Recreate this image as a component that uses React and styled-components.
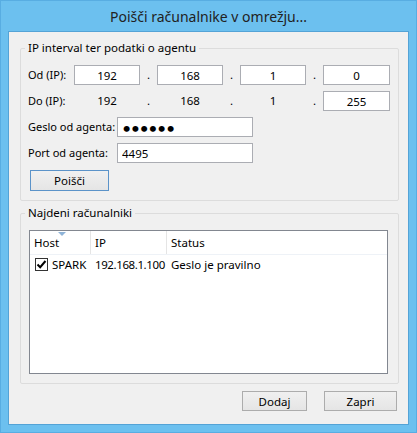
import React from "react"
import styled, { createGlobalStyle } from "styled-components"

const Global = createGlobalStyle`
  html, body {
    margin: 0;
    padding: 0;
    background: #6cc0ef;
  }
  body {
    font-family: "Noto Sans", "Open Sans", Arial, sans-serif;
    font-size: 11.5px;
    color: #000;
  }
`;

const Window = styled.div`
  width: 417px;
  height: 433px;
  box-sizing: border-box;
  background: #6cc0ef;
  border: 1px solid #58ade2;
  padding: 0 7px 7px;
  display: flex;
  flex-direction: column;
`;

const TitleBar = styled.div`
  height: 30px;
  display: flex;
  align-items: center;
  justify-content: center;
  font-size: 14px;
  color: #222;
`;

const Client = styled.div`
  flex: 1;
  background: #f0f0f0;
  border: 1px solid #54a3d6;
  padding: 8px 9px 12px 11px;
  display: flex;
  flex-direction: column;
`;

const Group = styled.fieldset`
  margin: ${p => p.$gap || 0}px 0 0;
  border: 1px solid #dcdcdc;
  border-radius: 2px;
  padding: 9px 9px 9px 7px;
  min-width: 0;
`;

const Legend = styled.legend`
  padding: 0 3px;
  margin-left: -3px;
  line-height: 16px;
  height: 16px;
`;

const Rows = styled.div`
  display: flex;
  flex-direction: column;
  gap: 6px;
`;

const IpRow = styled.div`
  display: grid;
  grid-template-columns: 46px 66px 17px 66px 17px 66px 17px 67px;
  height: 20px;
  align-items: center;
`;

const Label = styled.span`
  width: ${p => p.$width || "auto"};
  font-size: 11px;
  white-space: nowrap;
  line-height: 20px;
`;

const Dot = styled.span`
  text-align: center;
  line-height: 20px;
`;

const Octet = styled.span`
  text-align: center;
  line-height: 20px;
`;

const Input = styled.input`
  box-sizing: border-box;
  width: ${p => p.$width || "100%"};
  height: 20px;
  border: 1px solid #abadb3;
  background: #fff;
  font-family: inherit;
  font-size: 11.5px;
  color: #000;
  padding: 0 ${p => (p.$center ? 0 : 4)}px;
  text-align: ${p => (p.$center ? "center" : "left")};
  outline: none;
  margin: 0;
`;

const PasswordInput = styled(Input)`
  font-family: Lato, sans-serif;
  font-size: 16px;
  letter-spacing: -0.5px;
`;

const FieldRow = styled.div`
  display: flex;
  align-items: center;
  height: 20px;
`;

const Button = styled.button`
  box-sizing: border-box;
  width: ${p => p.$width}px;
  height: ${p => p.$height || 20}px;
  border: 1px solid ${p => (p.$primary ? "#5b93c9" : "#acacac")};
  background: linear-gradient(#f0f0f0, #e5e5e5);
  font-family: inherit;
  font-size: 11.5px;
  color: #000;
  padding: 0;
  margin: 0;
`;

const SearchRow = styled.div`
  margin-top: 7px;
  padding-left: 2px;
`;

const List = styled.div`
  margin-left: 1px;
  width: 359px;
  height: 144px;
  box-sizing: border-box;
  border: 1px solid #828790;
  background: #fff;
`;

const ListHeader = styled.div`
  display: grid;
  grid-template-columns: 61px 76px 1fr;
  height: 23px;
  border-bottom: 1px solid #eef2f7;
`;

const HeadCell = styled.div`
  position: relative;
  display: flex;
  align-items: center;
  padding-left: 4px;
  border-right: ${p => (p.$last ? "none" : "1px solid #e5e5e5")};
`;

const SortArrow = styled.span`
  position: absolute;
  top: 1px;
  left: 28px;
  width: 0;
  height: 0;
  border-left: 4px solid transparent;
  border-right: 4px solid transparent;
  border-top: 4px solid #8fb4d8;
`;

const ListRow = styled.div`
  display: grid;
  grid-template-columns: 61px 76px 1fr;
  height: 19px;
  align-items: center;
`;

const Cell = styled.div`
  display: flex;
  align-items: center;
  gap: 4px;
  padding-left: ${p => p.$pad ?? 4}px;
  white-space: nowrap;
  letter-spacing: ${p => p.$spacing || 0}px;
`;

const Check = styled.span`
  box-sizing: border-box;
  width: 13px;
  height: 13px;
  border: 1px solid #333;
  background: #fff;
  display: inline-flex;
  align-items: center;
  justify-content: center;
`;

const Footer = styled.div`
  margin-top: 7px;
  padding-right: 2px;
  display: flex;
  justify-content: flex-end;
  gap: 17px;
`;

export default function App() {
  return (
    <>
      <Global />
      <Window>
        <TitleBar>Poišči računalnike v omrežju...</TitleBar>
        <Client>
          <Group>
            <Legend>IP interval ter podatki o agentu</Legend>
            <Rows>
              <IpRow>
                <Label>Od (IP):</Label>
                <Input $center readOnly defaultValue="192" />
                <Dot>.</Dot>
                <Input $center readOnly defaultValue="168" />
                <Dot>.</Dot>
                <Input $center readOnly defaultValue="1" />
                <Dot>.</Dot>
                <Input $center readOnly defaultValue="0" />
              </IpRow>
              <IpRow>
                <Label>Do (IP):</Label>
                <Octet>192</Octet>
                <Dot>.</Dot>
                <Octet>168</Octet>
                <Dot>.</Dot>
                <Octet>1</Octet>
                <Dot>.</Dot>
                <Input $center readOnly defaultValue="255" />
              </IpRow>
              <FieldRow>
                <Label $width="89px">Geslo od agenta:</Label>
                <PasswordInput $width="136px" type="password" readOnly defaultValue="secret" />
              </FieldRow>
              <FieldRow>
                <Label $width="89px">Port od agenta:</Label>
                <Input $width="136px" readOnly defaultValue="4495" />
              </FieldRow>
            </Rows>
            <SearchRow>
              <Button $primary $width={79} $height={21}>Poišči</Button>
            </SearchRow>
          </Group>

          <Group $gap={4}>
            <Legend>Najdeni računalniki</Legend>
            <List>
              <ListHeader>
                <HeadCell>
                  <SortArrow />
                  Host
                </HeadCell>
                <HeadCell>IP</HeadCell>
                <HeadCell $last>Status</HeadCell>
              </ListHeader>
              <ListRow>
                <Cell $pad={5}>
                  <Check>
                    <svg width="11" height="11" viewBox="0 0 11 11">
                      <path d="M1.5 5.5 L4.2 8.2 L9.5 2" fill="none" stroke="#000" strokeWidth="2" />
                    </svg>
                  </Check>
                  SPARK
                </Cell>
                <Cell $spacing={-0.4}>192.168.1.100</Cell>
                <Cell>Geslo je pravilno</Cell>
              </ListRow>
            </List>
          </Group>

          <Footer>
            <Button $width={65}>Dodaj</Button>
            <Button $width={73}>Zapri</Button>
          </Footer>
        </Client>
      </Window>
    </>
  )
}
